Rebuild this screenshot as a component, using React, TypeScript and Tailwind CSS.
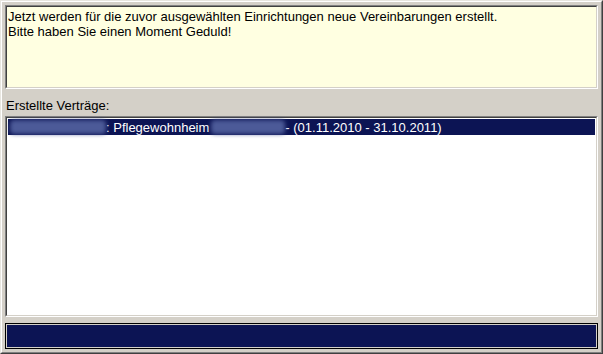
export default function App() {
  const font = { fontFamily: '"Liberation Sans", Arial, sans-serif' }

  return (
    <div
      className="w-[603px] h-[354px] bg-[#d4d0c8] border border-t-[#e8e6e0] border-l-[#e8e6e0] border-r-[#404040] border-b-[#404040] text-[13px] leading-[15px] text-black"
      style={font}
    >
      <div className="h-full border border-t-[#ffffff] border-l-[#ffffff] border-r-[#808080] border-b-[#808080] px-[3px] pt-[3px] pb-[3px] flex flex-col">
        {/* Info box */}
        <div className="h-[84px] border border-t-[#808080] border-l-[#808080] border-r-[#ffffff] border-b-[#ffffff]">
          <div className="h-full border border-t-[#404040] border-l-[#404040] border-r-[#d4d0c8] border-b-[#d4d0c8] bg-[#ffffe1] px-[1px] pt-[2px]">
            <p>Jetzt werden für die zuvor ausgewählten Einrichtungen neue Vereinbarungen erstellt.</p>
            <p>Bitte haben Sie einen Moment Geduld!</p>
          </div>
        </div>

        {/* Label */}
        <div className="h-[28px] pt-[9px] pl-[1px]">Erstellte Verträge:</div>

        {/* List */}
        <div className="h-[202px] border border-t-[#808080] border-l-[#808080] border-r-[#ffffff] border-b-[#ffffff]">
          <div className="h-full border border-t-[#404040] border-l-[#404040] border-r-[#d4d0c8] border-b-[#d4d0c8] bg-white p-[1px]">
            <div className="h-[16px] bg-[#0c1454] text-white flex items-center whitespace-nowrap">
              <div className="w-[2px]" />
              <div className="w-[96px] h-[14px] bg-[#4c5a98] blur-[2px] rounded-sm" />
              <span>: Pflegewohnheim</span>
              <div className="w-[74px] h-[14px] ml-[2px] bg-[#4c5a98] blur-[2px] rounded-sm" />
              <span>- (01.11.2010 - 31.10.2011)</span>
            </div>
          </div>
        </div>

        {/* Progress */}
        <div className="mt-[6px] h-[26px] border border-black">
          <div className="h-full border border-[#d4d0c8] bg-[#0c1454]" />
        </div>
      </div>
    </div>
  )
}
